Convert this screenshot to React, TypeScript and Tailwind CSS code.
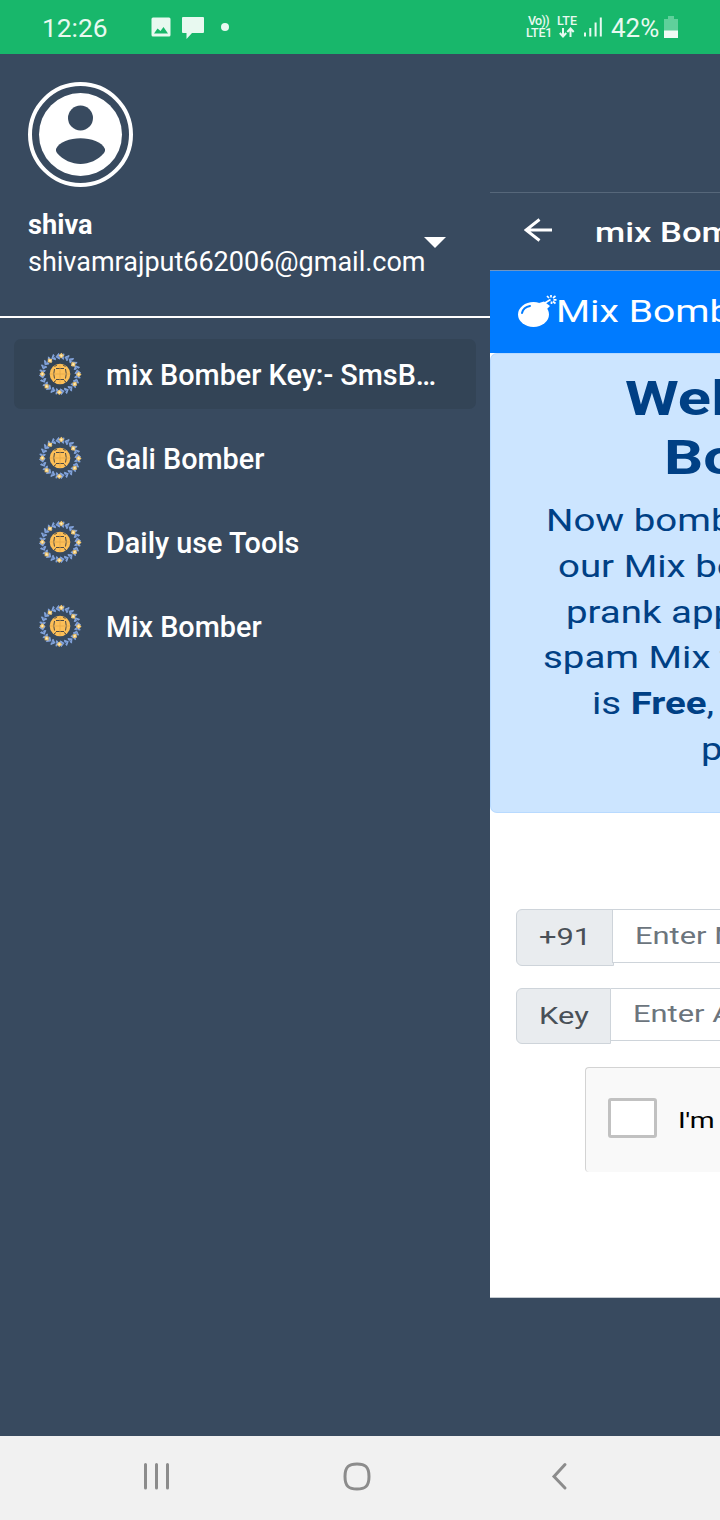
import type { ReactNode } from "react";

const leaves = Array.from({ length: 24 }, (_, i) => i);
const stars = [
  [4, 18.4],
  [54, 16.4],
  [91, 18.7],
  [124, 17.8],
  [182, 18.3],
  [227, 18.2],
  [270, 17.7],
  [323, 16.7],
];

function GlobeWreath() {
  return (
    <svg width="44" height="44" viewBox="-22 -22 44 44" className="shrink-0">
      {leaves.map((i) => (
        <g key={i} transform={`rotate(${i * 15 + 7}) translate(0 -17.8)`}>
          <path d="M-2 0.3H2" stroke="#6f8fc9" strokeWidth="0.9" />
          <path d="M-1.200 0L1.500 -2.800L1.700 -1Z M-1.200 0.500L1.500 3L1.800 1.200Z" fill="#86a7e0" stroke="#86a7e0" strokeWidth="0.8" />
        </g>
      ))}
      {stars.map(([angle, radius]) => (
        <g key={angle} transform={`rotate(${angle}) translate(0 ${-radius})`}>
          <path d="M0 -2.800L2.800 0L0 2.800L-2.800 0Z" fill="#efc470" />
          <circle r="1" fill="#fff0bd" />
        </g>
      ))}
      <circle cx="0" cy="0" r="10.300" fill="#fdbf57" />
      <g fill="none" stroke="#4d4a45" strokeWidth="1">
        <path d="M-5.500 -7.500L-3 -9M3 -9L5.500 -7.500M-4 -5.500H4M-4 5.500H4M-6 8L-4 6.500M4 6.500L6 8" />
        <path d="M-5.500 -5Q-7 0 -5.500 4.500M5.500 -5Q7 0 5.500 4.500" />
        <path d="M0 -9.500V9.500M-10 0H10" stroke="#e3a94b" strokeWidth="0.8" />
      </g>
    </svg>
  );
}

function MenuItem({ label, active }: { label: string; active?: boolean }) {
  return (
    <div className={`flex h-[70px] items-center rounded-[7px] pl-6 ${active ? "bg-[#334456]" : ""}`}>
      <GlobeWreath />
      <span className="ml-[24px] pt-[2px] text-[28.800px] leading-[34px] font-medium whitespace-nowrap text-white">{label}</span>
    </div>
  );
}

function Wide({ children }: { children: ReactNode }) {
  return <span className="block w-max origin-left scale-x-[1.26] whitespace-nowrap">{children}</span>;
}

function StatusBar() {
  return (
    <header className="flex h-[54px] shrink-0 items-center bg-[#18b76b] pl-[42px] text-[#e8f9f0]">
      <span className="w-[109px] pt-[2px] text-[26.300px] leading-[30px]">12:26</span>
      <svg width="80" height="24" viewBox="0 0 80 24" fill="currentColor">
        <path fillRule="evenodd" d="M2 2.500H18Q19.500 2.500 19.500 4V20Q19.500 21.500 18 21.500H2Q.5 21.500 .5 20V4Q.5 2.500 2 2.500ZM3 18.500H17L12.500 12L9.500 16L6.500 13.500Z" />
        <path d="M32 2H52Q53 2 53 3V17Q53 18 52 18H41L35.500 24V18H32Q31 18 31 17V3Q31 2 32 2Z" />
        <circle cx="74" cy="12" r="4" />
      </svg>
      <div className="ml-[295px] flex w-[28px] flex-col text-[12.500px] leading-[12px] font-medium">
        <span className="pl-[2px] tracking-[-0.700px]">Vo))</span>
        <span className="tracking-[-0.200px]">LTE1</span>
      </div>
      <div className="ml-[2px] flex w-[22px] flex-col items-center text-[12.500px] leading-[12px] font-medium">
        <span>LTE</span>
        <svg width="16" height="12" viewBox="0 0 16 12" fill="none" stroke="currentColor" strokeWidth="2">
          <path d="M4 1V9M.8 6L4 9.500L7.200 6M11.500 10V2M8.300 5L11.500 1.500L14.700 5" />
        </svg>
      </div>
      <svg width="20" height="22" viewBox="0 0 20 22" className="ml-[5px]" fill="currentColor">
        <path d="M1 16.500h2v4H1zM6.300 12h2v8.500h-2zM11.600 6.500h2v14h-2zM16.800 1.500h2v19h-2z" />
      </svg>
      <span className="ml-[8px] w-[50px] pt-[2px] text-[26px] leading-[30px]">42%</span>
      <svg width="16" height="24" viewBox="0 0 16 24" className="ml-[2px]">
        <path d="M5 1H11V4H15V23H1V4H5Z" fill="#5fd09b" />
        <path d="M1 15.500H15V23H1Z" fill="#f0fbf5" />
      </svg>
    </header>
  );
}

function Drawer() {
  return (
    <aside className="flex w-[490px] shrink-0 flex-col">
      <div className="flex h-[264px] shrink-0 flex-col border-b-2 border-white pt-7 pl-7">
        <svg width="105" height="105" viewBox="0 0 105 105">
          <circle cx="52.500" cy="52.500" r="50.500" fill="none" stroke="#fff" strokeWidth="4" />
          <circle cx="52.500" cy="52.500" r="41.500" fill="#fff" />
          <circle cx="52.500" cy="36" r="12.500" fill="#384a5f" />
          <path d="M28 67C31 60 42 56.300 52.500 56.300S74 60 77 67Q77.500 69 76 71C70 78 61 82 52.500 82S35 78 29 71Q27.500 69 28 67Z" fill="#384a5f" />
        </svg>
        <div className="flex pt-[20px] text-white">
          <div className="flex w-[396px] flex-col whitespace-nowrap">
            <span className="text-[27.200px] leading-9 font-bold">shiva</span>
            <span className="text-[27px] leading-[38px]">shivamrajput662006@gmail.com</span>
          </div>
          <svg width="22" height="11" viewBox="0 0 22 11" className="mt-[30px]">
            <path d="M0 0H22L11 11Z" fill="#fff" />
          </svg>
        </div>
      </div>
      <nav className="flex flex-col gap-[14px] px-[14px] pt-[21px]">
        <MenuItem active label="mix Bomber Key:- SmsB…" />
        <MenuItem label="Gali Bomber" />
        <MenuItem label="Daily use Tools" />
        <MenuItem label="Mix Bomber" />
      </nav>
    </aside>
  );
}

function PagePreview() {
  return (
    <main className="flex w-[230px] shrink-0 flex-col overflow-hidden pt-[138px]">
      <div className="flex h-[79px] shrink-0 items-center border-t border-b border-t-[#56677a] border-b-[#6f96c4] pl-[34px] text-white">
        <svg width="29" height="24" viewBox="0 0 29 24" fill="none" stroke="#fff" strokeWidth="3" className="-mt-[4px] shrink-0">
          <path d="M28 12H2M15.500 1.500L2 12L15.500 22.500" />
        </svg>
        <div className="ml-[42px] pt-[2px] text-[27.500px] leading-[34px] font-medium"><Wide>mix Bom</Wide></div>
      </div>
      <div className="flex h-[82px] shrink-0 items-center bg-[#007bff] pl-[27px] text-white">
        <svg width="40" height="34" viewBox="0 0 40 34" className="-mt-px shrink-0">
          <ellipse cx="16.500" cy="19.500" rx="15.500" ry="12.500" fill="#fff" />
          <path d="M22 8L27 6.500L33 11L29 15Z" fill="#fff" />
          <path d="M28 8L33.500 4.500M34 0V2.500M38.500 1L36 3M39.500 4.800H36.500M38.500 8.500L36 6.500M34.500 9V6.500M30 1L32 3" stroke="#fff" strokeWidth="1.700" fill="none" />
          <path d="M5 18Q6.500 12 13 11" stroke="#007bff" strokeWidth="2" fill="none" strokeLinecap="round" />
        </svg>
        <div className="-ml-px text-[31px] leading-[40px]"><Wide>Mix Bomb</Wide></div>
      </div>
      <div className="flex shrink-0 flex-col bg-white">
        <section className="h-[460px] overflow-hidden rounded-l-[7px] border-y border-l border-[#b8daff] bg-[#cce5ff] pt-[16px] text-[30.500px] leading-[45.700px] text-[#004085]">
          <div className="text-[48.800px] leading-[58.600px] font-bold">
            <div className="pl-[134px]"><Wide>Wel</Wide></div>
            <div className="pl-[173px]"><Wide>Bo</Wide></div>
          </div>
          <div className="pt-[11px]">
            <div className="pl-[55px]"><Wide>Now bomb</Wide></div>
            <div className="pl-[67px]"><Wide>our Mix bo</Wide></div>
            <div className="pl-[75px]"><Wide>prank app</Wide></div>
            <div className="pl-[52px]"><Wide>spam Mix t</Wide></div>
            <div className="pl-[101px]"><Wide>is <b>Free</b>,</Wide></div>
            <div className="pl-[210px]"><Wide>p</Wide></div>
          </div>
        </section>
        <form className="flex h-[485px] flex-col border-b border-[#c5cbd1] pt-[96px] pl-[26px] text-[24.500px]">
          <div className="flex h-[57px] items-start">
            <div className="h-[57px] w-[98px] shrink-0 rounded-l-[6px] border border-[#ced4da] bg-[#e9ecef] pt-[9px] pl-[22px] leading-[36px] text-[#495057]"><Wide>+91</Wide></div>
            <div className="-ml-[2px] h-[54px] w-[200px] shrink-0 border-y border-l border-[#ced4da] bg-white pt-[8px] pl-[22px] leading-[36px] text-[#6c757d]"><Wide>Enter N</Wide></div>
          </div>
          <div className="mt-[22px] flex h-[56px] items-start">
            <div className="h-[56px] w-[95px] shrink-0 rounded-l-[6px] border border-[#ced4da] bg-[#e9ecef] pt-[9px] pl-[22px] leading-[36px] text-[#495057]"><Wide>Key</Wide></div>
            <div className="h-[53px] w-[200px] shrink-0 border-y border-[#ced4da] bg-white pt-[7px] pl-[21.500px] leading-[36px] text-[#6c757d]"><Wide>Enter A</Wide></div>
          </div>
          <div className="mt-[23px] ml-[69px] flex h-[105px] w-[300px] shrink-0 items-center rounded-l-[4px] border-t border-l border-[#d3d3d3] bg-[#f9f9f9] pl-[22px] text-[22.500px] leading-[30px] text-black">
            <span className="mt-[-4px] h-[40px] w-[49px] shrink-0 rounded-[3px] border-3 border-[#c1c1c1] bg-white" />
            <div className="ml-[20.500px] tracking-[-0.300px]"><Wide>I'm</Wide></div>
          </div>
        </form>
      </div>
    </main>
  );
}

function NavigationBar() {
  return (
    <footer className="flex h-[84px] shrink-0 items-start bg-[#f1f1f1] pt-[25px] pl-[143px]">
      <svg width="28" height="30" viewBox="0 0 28 30" stroke="#8c8c8c" strokeWidth="3" strokeLinecap="round">
        <path d="M2.500 3.500V27M13.500 3.500V27M24.500 3.500V27" />
      </svg>
      <svg width="28" height="30" viewBox="0 0 28 30" fill="none" stroke="#8c8c8c" strokeWidth="3" className="ml-[172px]">
        <path d="M14 3C22 3 26 5.500 26 15.500S22 28 14 28S2 25.500 2 15.500S6 3 14 3Z" />
      </svg>
      <svg width="20" height="30" viewBox="0 0 20 30" fill="none" stroke="#8c8c8c" strokeWidth="3" strokeLinecap="round" className="ml-[177px]">
        <path d="M17 3.500L6 15.500L17 27" />
      </svg>
    </footer>
  );
}

export default function App() {
  return (
    <div className="flex h-[1520px] w-[720px] flex-col overflow-hidden bg-[#384a5f] font-[Roboto,sans-serif]">
      <StatusBar />
      <div className="flex h-[1382px] shrink-0">
        <Drawer />
        <PagePreview />
      </div>
      <NavigationBar />
    </div>
  );
}
